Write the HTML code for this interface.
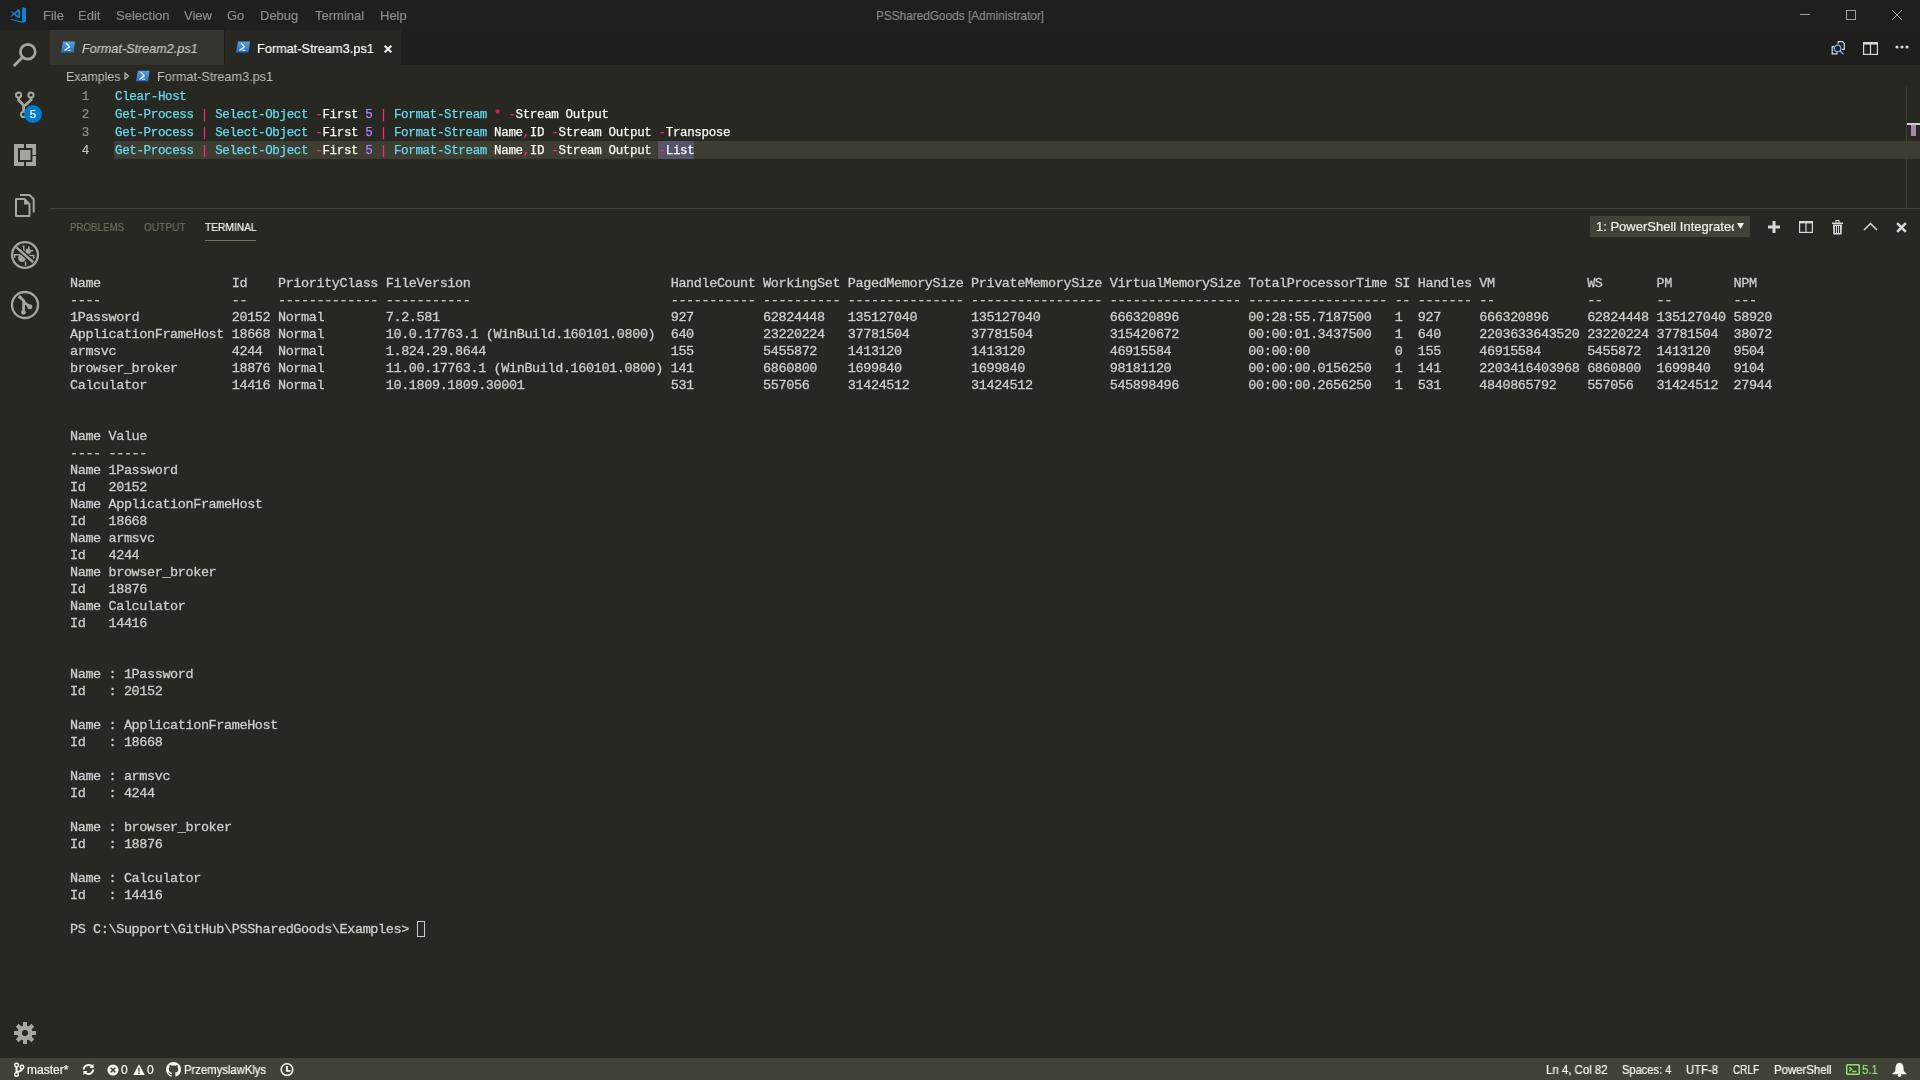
<!DOCTYPE html>
<html><head><meta charset="utf-8"><title>VS Code</title>
<style>
*{margin:0;padding:0;box-sizing:border-box}
html,body{width:1920px;height:1080px;overflow:hidden;background:#272822;font-family:"Liberation Sans",sans-serif;-webkit-text-stroke-width:0.2px}
.a{position:absolute}
svg{position:absolute;overflow:visible}
div{will-change:transform}
#title{left:0;top:0;width:1920px;height:30px;background:#1f1f1f}
.menu{position:absolute;top:8px;font-size:13px;line-height:15px;color:#8b8b8b;white-space:pre}
#wtitle{position:absolute;left:876px;top:8px;font-size:13px;line-height:15px;color:#8b8b8b;white-space:pre}
#activity{left:0;top:30px;width:50px;height:1028px;background:#272822}
#tabs{left:50px;top:30px;width:1870px;height:35px;background:#1e1f1c}
#tab1{left:50px;top:30px;width:174px;height:35px;background:#34352f}
#tab2{left:225px;top:30px;width:176px;height:35px;background:#272822}
.tabt{position:absolute;font-size:13px;line-height:15px;white-space:pre}
#crumbs{left:66px;top:69px;font-size:13px;line-height:15px;color:#c0c0ba;white-space:pre;-webkit-text-stroke-width:0}
#curline{left:114px;top:141px;width:1806px;height:18px;background:#3e3d32}
.mono{font-family:"Liberation Mono",monospace;white-space:pre}
#lnums{left:48.5px;top:88px;width:40px;text-align:right;font-size:12.5px;letter-spacing:-0.35px;line-height:18px;color:#90908a}
#code{left:114.5px;top:88px;font-size:12.5px;letter-spacing:-0.35px;line-height:18px;color:#f8f8f2;-webkit-text-stroke-width:0.25px}
.c{color:#66d9ef}
.o{color:#f92672}
.n{color:#ae81ff}
.wh{}
#ruler{left:1906px;top:87px;width:1px;height:121px;background:#3f3f38}
#panelborder{left:50px;top:208px;width:1870px;height:1px;background:#414339}
.ptab{position:absolute;top:221px;font-size:11px;line-height:13px;white-space:pre}
#term{left:70px;top:258px;font-size:13.5px;letter-spacing:-0.4px;line-height:17px;color:#cccccc;-webkit-text-stroke-width:0.3px}
#cursor{left:417px;top:921px;width:8px;height:16px;border:1px solid #cccccc}
#status{left:0;top:1058px;width:1920px;height:22px;background:#414339}
.st{position:absolute;top:1063px;transform-origin:0 0;font-size:12px;line-height:14px;color:#f8f8f2;white-space:pre}
</style></head><body>
<div id="title" class="a"></div>
<svg style="left:0;top:0" width="36" height="30" viewBox="0 0 36 30"><g fill="#0a82d8"><path d="M22.1 7 L26 8.3 V21.7 L22.1 23 Z"/><path d="M10.2 19.4 L11.2 19 L22.1 21.6 V23 Z"/><path fill-rule="evenodd" d="M17.9 9.2 L20.1 9.8 V17.5 L17.6 18.1 L13.9 14.6 L11.6 16.7 L10.8 16 L13.1 13.85 L10.8 11.7 L11.6 11 L13.9 13.1 Z M15.5 13.85 L18.3 11.6 V16.1 Z"/></g></svg>
<div class="menu" style="left:43px">File</div>
<div class="menu" style="left:78px">Edit</div>
<div class="menu" style="left:116px">Selection</div>
<div class="menu" style="left:184px">View</div>
<div class="menu" style="left:227px">Go</div>
<div class="menu" style="left:260px">Debug</div>
<div class="menu" style="left:315px">Terminal</div>
<div class="menu" style="left:380px">Help</div>
<div id="wtitle" style="transform:scaleX(0.909);transform-origin:0 0">PSSharedGoods [Administrator]</div>
<svg style="left:1800px;top:14px" width="10" height="1"><rect x="0" y="0" width="10" height="1" fill="#a0a0a0"/></svg>
<svg style="left:1846px;top:10px" width="10" height="10"><rect x="0.5" y="0.5" width="9" height="9" fill="none" stroke="#a0a0a0" stroke-width="1"/></svg>
<svg style="left:1892px;top:10px" width="10" height="10"><path d="M0 0 L10 10 M10 0 L0 10" stroke="#a0a0a0" stroke-width="1"/></svg>

<div id="activity" class="a"></div>
<!-- search -->
<svg style="left:12px;top:42px" width="26" height="26" viewBox="0 0 26 26"><g stroke="#a6a6a1" stroke-width="2.7" fill="none" stroke-linecap="round"><circle cx="15.8" cy="9.8" r="7.4"/><path d="M10.5 15.3 L2.6 23.2" stroke-width="3"/></g></svg>
<!-- scm -->
<svg style="left:12px;top:92px" width="26" height="26" viewBox="0 0 26 26"><g stroke="#a6a6a1" stroke-width="2" fill="none"><circle cx="6.6" cy="3" r="2.6"/><circle cx="19" cy="3" r="2.6"/><circle cx="11.6" cy="22.4" r="2.6"/></g><g stroke="#a6a6a1" stroke-width="2.8" fill="none"><path d="M6.6 5.6 V8 L11.6 13.2 V19.8 M19 5.6 V8 L12.8 13.8"/></g></svg>
<svg style="left:24px;top:105px" width="18" height="18"><circle cx="9" cy="9" r="9" fill="#007acc"/></svg>
<div class="a" style="left:24px;top:107px;width:18px;text-align:center;font-size:11.5px;line-height:14px;color:#fff">5</div>
<!-- extensions -->
<svg style="left:12px;top:142px" width="26" height="26" viewBox="0 0 26 26"><g fill="#a6a6a1"><path d="M2 2 H12 V6 H6 V20 H12 V24 H2 Z"/><path d="M14 2 H24 V13 H20.4 V6 H14 Z"/><path d="M14 20 H20.4 V14 H24 V24 H14 Z"/><rect x="8" y="8" width="10.5" height="10"/></g></svg>
<!-- explorer -->
<svg style="left:12px;top:192px" width="26" height="26" viewBox="0 0 26 26"><g stroke="#a6a6a1" stroke-width="2" fill="none" stroke-linejoin="round"><path d="M4 7 H12.5 L17.5 12 V24 H4 Z"/><path d="M8 3 H17.5 L21.7 7.2 V20.4"/></g><path d="M12 6.5 L18 12.5 H12 Z" fill="#a6a6a1"/></svg>
<!-- debug -->
<svg style="left:0;top:230px" width="50" height="50" viewBox="0 230 50 50"><g fill="#a6a6a1"><circle cx="21.9" cy="258.2" r="3.7"/><circle cx="28.2" cy="251.2" r="2.7"/></g><g stroke="#a6a6a1" stroke-width="1.5" fill="none"><path d="M14.6 257.8 V254.7 H20.5 M22.4 246.2 H23.8 V251.5 M28.5 255.6 H33.8 V258.8 M25.6 261.5 V265.8 M28.8 246.5 V249.2 M30.8 250.8 H33.2"/></g><path d="M15.5 246.5 L34.2 263.1" stroke="#272822" stroke-width="5"/><path d="M16.5 247.4 L33.2 262.2" stroke="#a6a6a1" stroke-width="2.5"/><circle cx="25" cy="255" r="12.9" stroke="#a6a6a1" stroke-width="2.3" fill="none"/></svg>
<!-- last -->
<svg style="left:0;top:280px" width="50" height="50" viewBox="0 280 50 50"><circle cx="25" cy="305" r="13" stroke="#a6a6a1" stroke-width="2.3" fill="none"/><g stroke="#a6a6a1" stroke-width="2.8" fill="none" stroke-linecap="round"><path d="M20 297.1 L23.7 300.8 L23.5 312 M24.3 302.5 L30 306.8"/></g><g fill="#a6a6a1"><circle cx="23.5" cy="312.3" r="2.4"/><circle cx="29.8" cy="306.8" r="2.5"/><circle cx="20" cy="297.2" r="1.8"/></g></svg>
<!-- gear -->
<svg style="left:0;top:1008px" width="50" height="50" viewBox="0 1008 50 50"><g transform="translate(25 1033)" fill="#a6a6a1"><circle r="7.6"/><rect x="-2" y="-11" width="4" height="6" transform="rotate(0)"/><rect x="-2" y="-11" width="4" height="6" transform="rotate(45)"/><rect x="-2" y="-11" width="4" height="6" transform="rotate(90)"/><rect x="-2" y="-11" width="4" height="6" transform="rotate(135)"/><rect x="-2" y="-11" width="4" height="6" transform="rotate(180)"/><rect x="-2" y="-11" width="4" height="6" transform="rotate(225)"/><rect x="-2" y="-11" width="4" height="6" transform="rotate(270)"/><rect x="-2" y="-11" width="4" height="6" transform="rotate(315)"/></g><circle cx="25" cy="1033" r="3" fill="#272822"/></svg>

<div id="tabs" class="a"></div>
<div id="tab1" class="a"></div>
<div id="tab2" class="a"></div>
<svg style="left:61px;top:41px" width="15" height="12" viewBox="0 0 15 12"><defs><linearGradient id="pg" x1="0" y1="0" x2="0" y2="1"><stop offset="0" stop-color="#5aa0e0"/><stop offset="1" stop-color="#1f70c0"/></linearGradient></defs><path d="M2 0.5 H14 L12.6 11.5 H0 Z" fill="url(#pg)"/><path d="M5 2 L8.5 5.8 L3.5 9.5" stroke="#f4f4f4" stroke-width="1.3" fill="none"/><path d="M6.5 9.3 H9.5" stroke="#f4f4f4" stroke-width="1.1"/></svg>
<div class="tabt" style="left:82px;top:41px;color:#c8c8c3;font-style:italic;transform:scaleX(0.97);transform-origin:0 0">Format-Stream2.ps1</div>
<svg style="left:236px;top:41px" width="15" height="12" viewBox="0 0 15 12"><path d="M2 0.5 H14 L12.6 11.5 H0 Z" fill="url(#pg)"/><path d="M5 2 L8.5 5.8 L3.5 9.5" stroke="#f4f4f4" stroke-width="1.3" fill="none"/><path d="M6.5 9.3 H9.5" stroke="#f4f4f4" stroke-width="1.1"/></svg>
<div class="tabt" style="left:257px;top:41px;color:#ffffff;transform:scaleX(0.98);transform-origin:0 0">Format-Stream3.ps1</div>
<svg style="left:384px;top:44.5px" width="8" height="8"><path d="M0.7 0.7 L7.3 7.3 M7.3 0.7 L0.7 7.3" stroke="#f0f0f0" stroke-width="2"/></svg>
<!-- editor actions -->
<svg style="left:1824px;top:36px" width="32" height="24" viewBox="0 0 32 24"><g stroke="#dcdcdc" stroke-width="1.2" fill="none"><path d="M14.2 7.8 V5.7 H18.6 L20.3 7.4 V13.4 H17.8"/><path d="M10.2 10.6 H8.2 V17.8 H12.9 V16.2"/></g><circle cx="13.6" cy="12.4" r="3.2" stroke="#75beff" stroke-width="1.2" fill="none"/><path d="M15.9 14.8 L19.5 18.4" stroke="#75beff" stroke-width="1.3"/></svg>
<svg style="left:1863px;top:42px" width="15" height="13" viewBox="0 0 15 13"><g fill="none" stroke="#d8d8d8" stroke-width="1.2"><rect x="0.6" y="0.6" width="13.8" height="11.8"/><path d="M7.5 1 V12.5"/></g><rect x="0.6" y="0.6" width="13.8" height="2" fill="#d8d8d8"/></svg>
<svg style="left:1895px;top:45px" width="15" height="4"><circle cx="2" cy="2" r="1.6" fill="#d8d8d8"/><circle cx="7" cy="2" r="1.6" fill="#d8d8d8"/><circle cx="12" cy="2" r="1.6" fill="#d8d8d8"/></svg>

<svg style="left:124px;top:72px" width="6" height="8"><path d="M1 1 L4.5 4 L1 7 Z" fill="none" stroke="#b8b8b2" stroke-width="1.2"/></svg>
<div id="crumbs" class="a" style="transform:scaleX(0.955);transform-origin:0 0">Examples</div>
<svg style="left:136px;top:70px" width="14.5" height="12" viewBox="0 0 15 12"><path d="M2 0.5 H14 L12.6 11.5 H0 Z" fill="url(#pg)"/><path d="M5 2 L8.5 5.8 L3.5 9.5" stroke="#f4f4f4" stroke-width="1.3" fill="none"/><path d="M6.5 9.3 H9.5" stroke="#f4f4f4" stroke-width="1.1"/></svg>
<div class="a" style="left:157px;top:69px;font-size:13px;line-height:15px;color:#c0c0ba;white-space:pre;-webkit-text-stroke-width:0;transform:scaleX(0.974);transform-origin:0 0">Format-Stream3.ps1</div>

<div id="curline" class="a"></div>
<div class="a" style="left:658px;top:141px;width:36px;height:18px;background:#56546a"></div>
<div id="lnums" class="a mono">1
2
3
<span style="color:#c2c2bf">4</span></div>
<div id="code" class="a mono"><span class="c">Clear-Host</span>
<span class="c">Get-Process</span> <span class="o">|</span> <span class="c">Select-Object</span> <span class="o">-</span>First <span class="n">5</span> <span class="o">|</span> <span class="c">Format-Stream</span> <span class="o">*</span> <span class="o">-</span>Stream Output
<span class="c">Get-Process</span> <span class="o">|</span> <span class="c">Select-Object</span> <span class="o">-</span>First <span class="n">5</span> <span class="o">|</span> <span class="c">Format-Stream</span> Name<span class="o">,</span>ID <span class="o">-</span>Stream Output <span class="o">-</span>Transpose
<span class="c">Get-Process</span> <span class="o">|</span> <span class="c">Select-Object</span> <span class="o">-</span>First <span class="n">5</span> <span class="o">|</span> <span class="c">Format-Stream</span> Name<span class="o">,</span>ID <span class="o">-</span>Stream Output <span class="wh"><span class="o">-</span>List</span></div>
<div id="ruler" class="a"></div>
<div class="a" style="left:1907px;top:123px;width:13px;height:2px;background:#d0d0d0"></div>
<div class="a" style="left:1911px;top:125px;width:5px;height:11px;background:#a889a8"></div>

<div id="panelborder" class="a"></div>
<div class="ptab" style="left:70px;color:#75715e;-webkit-text-stroke-width:0.1px;transform:scaleX(0.885);transform-origin:0 0">PROBLEMS</div>
<div class="ptab" style="left:143.5px;color:#75715e;-webkit-text-stroke-width:0.1px;transform:scaleX(0.92);transform-origin:0 0">OUTPUT</div>
<div class="ptab" style="left:205px;color:#f8f8f2;transform:scaleX(0.927);transform-origin:0 0">TERMINAL</div>
<div class="a" style="left:205px;top:240px;width:51px;height:1px;background:#75715e"></div>
<div class="a" style="left:1590px;top:216px;width:160px;height:21px;background:#414339;overflow:hidden"><div style="position:absolute;left:6px;top:3px;font-size:13px;line-height:15px;color:#f0f0ea;white-space:pre">1: PowerShell Integrated Console</div><div style="position:absolute;left:144px;top:0;width:16px;height:21px;background:#414339"></div></div>
<svg style="left:1737px;top:223px" width="7" height="6"><path d="M0 0 H7 L3.5 6 Z" fill="#f0f0ea"/></svg>
<svg style="left:1768px;top:221px" width="12" height="12"><rect x="0" y="4.5" width="12" height="3" fill="#d8d8d8"/><rect x="4.5" y="0" width="3" height="12" fill="#d8d8d8"/></svg>
<svg style="left:1799px;top:221px" width="14" height="12"><g fill="none" stroke="#d8d8d8" stroke-width="1.2"><rect x="0.6" y="0.6" width="12.8" height="10.8"/><path d="M7 1 V11.5"/></g><rect x="0.6" y="0.6" width="12.8" height="1.8" fill="#d8d8d8"/></svg>
<svg style="left:1832px;top:219.5px" width="11" height="15" viewBox="0 0 11 15"><g fill="#d8d8d8"><path fill-rule="evenodd" d="M3.5 0 H7.5 V2.5 H11 V4 H0 V2.5 H3.5 Z M4.5 1 V2.5 H6.5 V1 Z"/><path fill-rule="evenodd" d="M1 4.5 H10 L9.6 14.5 H1.4 Z M3 6 V13 H4 V6 Z M5 6 V13 H6 V6 Z M7 6 V13 H8 V6 Z"/></g></svg>
<svg style="left:1863px;top:222px" width="15" height="9"><path d="M1 8 L7.5 1.5 L14 8" stroke="#d8d8d8" stroke-width="1.5" fill="none"/></svg>
<svg style="left:1896px;top:221.5px" width="11" height="11"><path d="M1.2 1.2 L9.8 9.8 M9.8 1.2 L1.2 9.8" stroke="#d8d8d8" stroke-width="2.6"/></svg>

<div id="term" class="a mono">
Name                 Id    PriorityClass FileVersion                          HandleCount WorkingSet PagedMemorySize PrivateMemorySize VirtualMemorySize TotalProcessorTime SI Handles VM            WS       PM        NPM
----                 --    ------------- -----------                          ----------- ---------- --------------- ----------------- ----------------- ------------------ -- ------- --            --       --        ---
1Password            20152 Normal        7.2.581                              927         62824448   135127040       135127040         666320896         00:28:55.7187500   1  927     666320896     62824448 135127040 58920
ApplicationFrameHost 18668 Normal        10.0.17763.1 (WinBuild.160101.0800)  640         23220224   37781504        37781504          315420672         00:00:01.3437500   1  640     2203633643520 23220224 37781504  38072
armsvc               4244  Normal        1.824.29.8644                        155         5455872    1413120         1413120           46915584          00:00:00           0  155     46915584      5455872  1413120   9504
browser_broker       18876 Normal        11.00.17763.1 (WinBuild.160101.0800) 141         6860800    1699840         1699840           98181120          00:00:00.0156250   1  141     2203416403968 6860800  1699840   9104
Calculator           14416 Normal        10.1809.1809.30001                   531         557056     31424512        31424512          545898496         00:00:00.2656250   1  531     4840865792    557056   31424512  27944


Name Value
---- -----
Name 1Password
Id   20152
Name ApplicationFrameHost
Id   18668
Name armsvc
Id   4244
Name browser_broker
Id   18876
Name Calculator
Id   14416


Name : 1Password
Id   : 20152

Name : ApplicationFrameHost
Id   : 18668

Name : armsvc
Id   : 4244

Name : browser_broker
Id   : 18876

Name : Calculator
Id   : 14416

PS C:\Support\GitHub\PSSharedGoods\Examples&gt; </div>
<div id="cursor" class="a"></div>

<div id="status" class="a"></div>
<svg style="left:10px;top:1059px" width="20" height="20" viewBox="0 0 20 20"><g stroke="#f8f8f2" stroke-width="1.4" fill="none"><circle cx="6.5" cy="6.1" r="1.8"/><circle cx="12" cy="8" r="1.8"/><circle cx="6.5" cy="15.4" r="1.8"/></g><g stroke="#f8f8f2" stroke-width="2" fill="none"><path d="M6.5 7.9 V13.6 M12 9.8 C12 12 9.5 12.2 7.2 13.2"/></g></svg>
<div class="st" style="left:27.4px">master*</div>
<svg style="left:78px;top:1059px" width="22" height="20" viewBox="0 0 22 20"><g stroke="#f8f8f2" stroke-width="1.8" fill="none"><path d="M5.6 10.5 A5 5 0 0 1 13.8 7.2"/><path d="M15.4 10.3 A5 5 0 0 1 7.2 13.8"/></g><path d="M15.6 4.8 L15.6 8.9 L11.5 8.9 Z M5.4 16 L5.4 11.9 L9.5 11.9 Z" fill="#f8f8f2"/></svg>
<svg style="left:106.5px;top:1063.5px" width="12" height="12"><circle cx="6" cy="6" r="5.6" fill="#f8f8f2"/><path d="M3.7 3.7 L8.3 8.3 M8.3 3.7 L3.7 8.3" stroke="#414339" stroke-width="1.6"/></svg>
<div class="st" style="left:121px">0</div>
<svg style="left:133px;top:1063.5px" width="12" height="12"><path d="M6 0.3 L11.8 11 H0.2 Z" fill="#f8f8f2"/><path d="M6 3.8 V7.6 M6 8.6 V10" stroke="#414339" stroke-width="1.4"/></svg>
<div class="st" style="left:147px">0</div>
<svg style="left:166px;top:1062.2px" width="15" height="15" viewBox="0 0 16 16"><path fill="#f8f8f2" d="M8 0C3.58 0 0 3.58 0 8c0 3.54 2.29 6.53 5.47 7.59.4.07.55-.17.55-.38 0-.19-.01-.82-.01-1.49-2.01.37-2.53-.49-2.69-.94-.09-.23-.48-.94-.82-1.13-.28-.15-.68-.52-.01-.53.63-.01 1.08.58 1.23.82.72 1.21 1.87.87 2.33.66.07-.52.28-.87.51-1.07-1.78-.2-3.640-.89-3.64-3.950 0-.87.31-1.590.82-2.150-.08-.2-.36-1.020.08-2.120 0 0 .67-.21 2.2.82.64-.18 1.32-.27 2-.27.68 0 1.36.09 2 .27 1.53-1.04 2.2-.82 2.2-.82.44 1.1.16 1.92.08 2.12.51.56.82 1.27.82 2.15 0 3.07-1.87 3.75-3.65 3.95.29.25.54.73.54 1.48 0 1.07-.01 1.93-.01 2.200 0 .21.15.46.55.38A8.013 8.013 0 0016 8c0-4.42-3.58-8-8-8z"/></svg>
<div class="st" style="left:184px;transform:scaleX(0.94)">PrzemyslawKlys</div>
<svg style="left:280px;top:1063px" width="14" height="14"><circle cx="7" cy="6.6" r="5.8" stroke="#f8f8f2" stroke-width="1.6" fill="none"/><path d="M6.9 3 V7.9 H10.5" stroke="#f8f8f2" stroke-width="1.9" fill="none"/></svg>

<div class="st" style="left:1546px;transform:scaleX(0.953)">Ln 4, Col 82</div>
<div class="st" style="left:1622px;transform:scaleX(0.925)">Spaces: 4</div>
<div class="st" style="left:1686px;transform:scaleX(0.945)">UTF-8</div>
<div class="st" style="left:1733px;transform:scaleX(0.83)">CRLF</div>
<div class="st" style="left:1774px;transform:scaleX(0.95)">PowerShell</div>
<svg style="left:1846px;top:1064px" width="14" height="11"><rect x="0.75" y="0.75" width="12.5" height="9.5" rx="0.8" fill="none" stroke="#8ce66e" stroke-width="1.5"/><path d="M3.3 3.2 L5.6 5.2 L3.3 7.2 M6.3 7.5 H10.5" stroke="#8ce66e" stroke-width="1.4" fill="none"/></svg>
<div class="st" style="left:1862px;color:#8ce66e;transform:scaleX(0.94)">5.1</div>
<svg style="left:1891.5px;top:1062px" width="15" height="15" viewBox="0 0 15 15"><path d="M7.5 0.8 C4.8 0.8 3.7 3 3.5 5.5 L3.2 9.3 L0.5 11.4 V12.3 H14.5 V11.4 L11.8 9.3 L11.5 5.5 C11.3 3 10.2 0.8 7.5 0.8 Z" fill="#f8f8f2"/><circle cx="7.5" cy="13.2" r="1.7" fill="#f8f8f2"/></svg>
</body></html>
